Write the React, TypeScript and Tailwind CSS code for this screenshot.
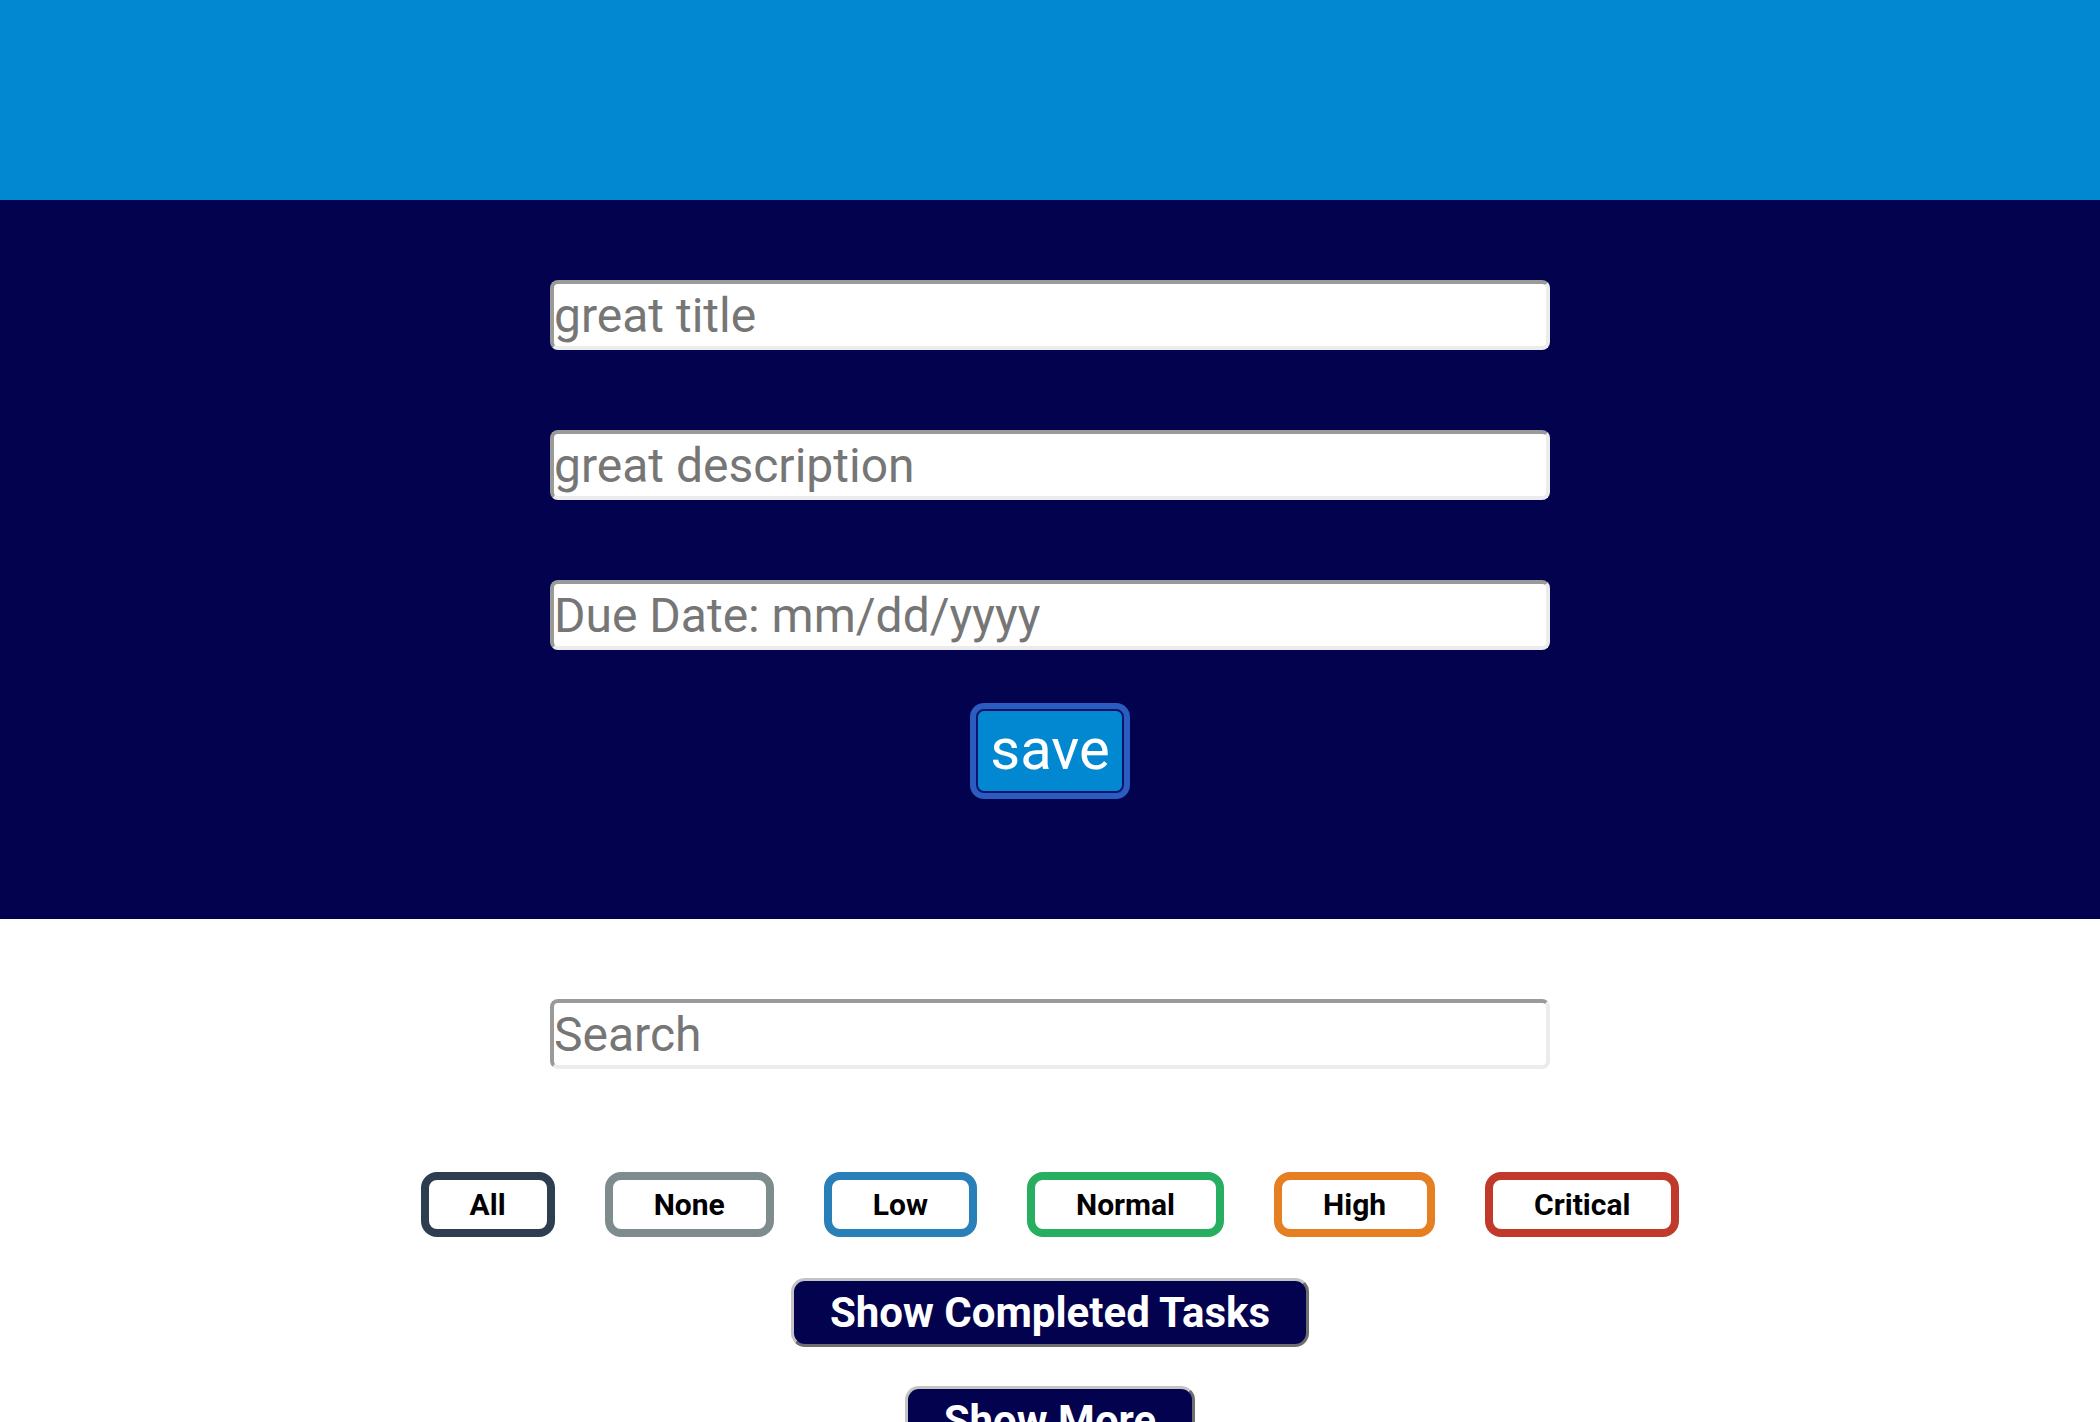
import { useState } from "react";

const filters = [
  { label: "All", color: "border-[#2c3e50]" },
  { label: "None", color: "border-[#7f8c8d]" },
  { label: "Low", color: "border-[#2980b9]" },
  { label: "Normal", color: "border-[#27ae60]" },
  { label: "High", color: "border-[#e67e22]" },
  { label: "Critical", color: "border-[#c0392b]" },
];

const inputCls =
  "block w-[1000px] h-[70px] bg-white border-4 border-t-[#9a9a9a] border-l-[#9a9a9a] border-b-[#ececec] border-r-[#ececec] rounded-lg px-0 text-[48px] leading-none text-black placeholder:text-[#767676] outline-none";

const darkBtn =
  "bg-[#02024e] text-white font-bold text-[42px] leading-none rounded-[14px] border-[3px] border-t-[#c4c4c4] border-l-[#c4c4c4] border-b-[#6e6e6e] border-r-[#6e6e6e]";

export default function App() {
  const [title, setTitle] = useState("");
  const [desc, setDesc] = useState("");
  const [due, setDue] = useState("");
  const [search, setSearch] = useState("");
  const [active, setActive] = useState("All");

  return (
    <div className="min-h-screen bg-white font-['Roboto','Liberation_Sans',sans-serif]">
      <div className="h-[200px] bg-[#0288d1]" />

      {/* new task form */}
      <div className="bg-[#02024e] pt-[80px] pb-[126px] flex flex-col items-center">
        <div className="flex flex-col gap-[80px]">
          <input className={inputCls} placeholder="great title" value={title} onChange={(e) => setTitle(e.target.value)} />
          <input className={inputCls} placeholder="great description" value={desc} onChange={(e) => setDesc(e.target.value)} />
          <input className={inputCls} placeholder="Due Date: mm/dd/yyyy" value={due} onChange={(e) => setDue(e.target.value)} />
        </div>
        <button className="mt-[59px] w-[148px] h-[84px] bg-[#0288d1] text-white text-[58px] leading-none rounded-lg border-2 border-[#0c136e] ring-[6px] ring-[#2b5cbf] pb-[4px]">
          save
        </button>
      </div>

      {/* list controls */}
      <div className="pt-[80px] flex flex-col items-center">
        <input
          className={inputCls}
          placeholder="Search"
          value={search}
          onChange={(e) => setSearch(e.target.value)}
        />

        <div className="mt-[103px] flex gap-[50px]">
          {filters.map((f) => (
            <button
              key={f.label}
              onClick={() => setActive(f.label)}
              className={`h-[65px] px-[41px] bg-white border-[8px] ${f.color} rounded-[16px] text-black font-bold text-[30px] leading-none`}
            >
              {f.label}
            </button>
          ))}
        </div>

        <button className={`mt-[41px] h-[69px] px-[36px] ${darkBtn}`}>Show Completed Tasks</button>
        <button className={`mt-[39px] mb-[40px] h-[69px] px-[36px] ${darkBtn}`}>Show More</button>
      </div>
    </div>
  );
}
